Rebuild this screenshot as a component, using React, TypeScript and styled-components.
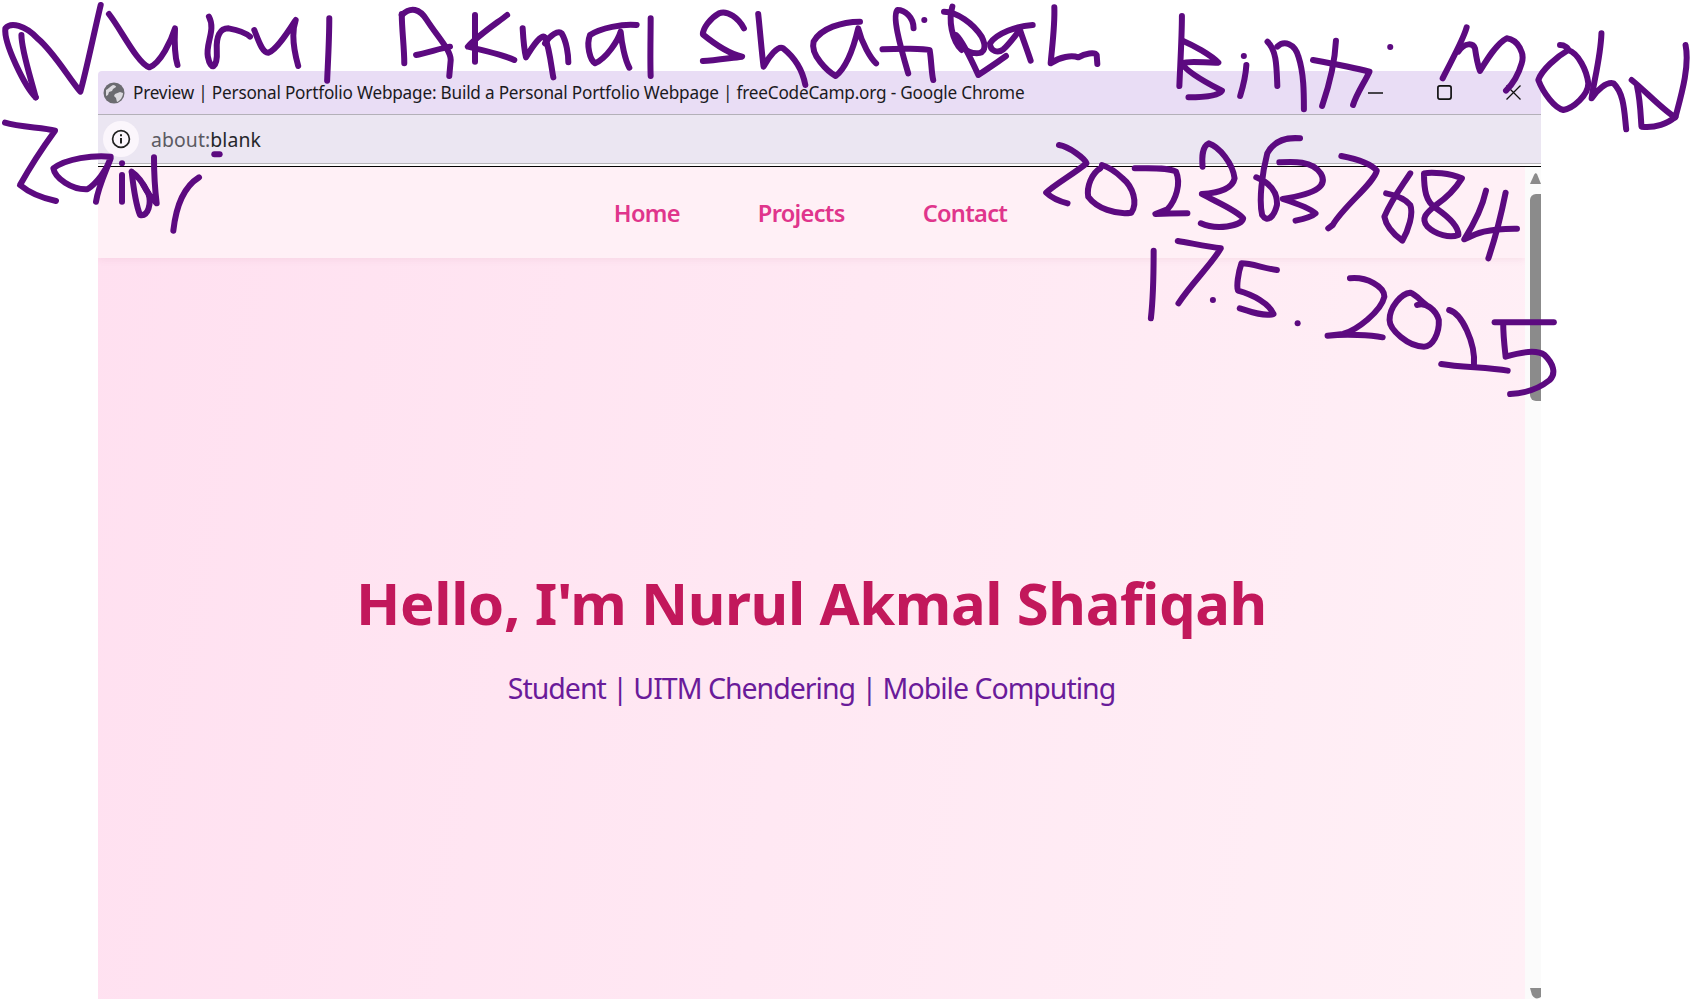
import React from "react";
import styled, { createGlobalStyle } from "styled-components";

const Global = createGlobalStyle`
  html, body { margin: 0; padding: 0; background: #fff; height: 100%; overflow: hidden; }
  body { font-family: "Open Sans", "Noto Sans", "Liberation Sans", sans-serif; }
`;

const Stage = styled.div`
  position: relative;
  width: 1691px;
  height: 999px;
  overflow: hidden;
  padding: 71px 150px 0 98px;
  box-sizing: border-box;
`;

const Window = styled.div`
  display: flex;
  flex-direction: column;
  height: 928px;
  border-top-left-radius: 4px;
  overflow: hidden;
`;

const TitleBar = styled.div`
  flex: 0 0 44px;
  box-sizing: border-box;
  display: flex;
  align-items: center;
  padding: 0 20px 0 5px;
  background: #e9ddf5;
  border-bottom: 1px solid #b3b0b8;
`;

const WindowTitle = styled.span`
  flex: 1;
  margin-left: 8px;
  font-family: "Noto Sans", sans-serif;
  font-size: 17.2px;
  letter-spacing: -0.21px;
  color: #1b1a1d;
  white-space: nowrap;
`;

const WindowControls = styled.div`
  display: flex;
  align-items: center;
  gap: 54px;
`;

const AddressBar = styled.div`
  flex: 0 0 49px;
  box-sizing: border-box;
  display: flex;
  align-items: center;
  padding-left: 5px;
  background: #ebe6f2;
  border-bottom: 1px solid #b9b7bc;
`;

const InfoChip = styled.div`
  width: 36px;
  height: 36px;
  border-radius: 50%;
  background: #fbf6fc;
  display: flex;
  align-items: center;
  justify-content: center;
`;

const Url = styled.span`
  margin-left: 12px;
  font-family: "Noto Sans", sans-serif;
  font-size: 19.4px;
  letter-spacing: 0.1px;
  color: #5b5a62;
`;

const UrlHost = styled.span`
  color: #26262b;
`;

const Rule = styled.div`
  flex: 0 0 3px;
  box-sizing: border-box;
  background: #fff;
  border-bottom: 1px solid #000;
`;

const Viewport = styled.div`
  flex: 1;
  min-height: 0;
  display: flex;
`;

const Page = styled.main`
  flex: 1;
  display: flex;
  flex-direction: column;
  background: linear-gradient(100deg, #ffe0f0 0%, #fff0f6 100%);
`;

const Nav = styled.nav`
  flex: 0 0 91px;
  box-sizing: border-box;
  display: flex;
  align-items: center;
  justify-content: center;
  gap: 78px;
  padding-right: 2px;
  background: #fff0f6;
  box-shadow: 0 2px 6px rgba(200, 120, 160, 0.12);
`;

const NavLink = styled.a`
  font-family: "Noto Sans", sans-serif;
  font-weight: 600;
  font-size: 23.6px;
  letter-spacing: -0.7px;
  color: #e0358c;
`;

const Hero = styled.section`
  flex: 1;
  display: flex;
  flex-direction: column;
  align-items: center;
  padding-top: 305px;
`;

const Heading = styled.h1`
  margin: 0;
  font-family: "Noto Sans", sans-serif;
  font-weight: 700;
  font-size: 58px;
  line-height: 80px;
  letter-spacing: -0.4px;
  color: #c2185b;
  white-space: nowrap;
`;

const Sub = styled.p`
  margin: 24px 0 0;
  font-family: "Noto Sans", sans-serif;
  font-size: 28.5px;
  line-height: 42px;
  letter-spacing: -1px;
  color: #6a1b9a;
  white-space: nowrap;
`;

const Scrollbar = styled.aside`
  flex: 0 0 16px;
  display: flex;
  flex-direction: column;
  align-items: flex-end;
  background: #fbfbfb;
  padding-top: 6px;
`;

const ScrollArrow = styled.svg`
  display: block;
  flex: none;
`;

const ScrollThumb = styled.div`
  width: 11px;
  height: 207px;
  margin-top: 9px;
  border-radius: 6px 0 0 6px;
  background: #8b8b8b;
`;

const ScrollSpacer = styled.div`
  flex: 1;
`;

const Ink = styled.svg`
  position: absolute;
  left: 0;
  top: 0;
  pointer-events: none;
  fill: none;
  stroke: #5c0a80;
  stroke-width: 6;
  stroke-linecap: round;
  stroke-linejoin: round;
`;

const InkStroke = styled.path`
  vector-effect: non-scaling-stroke;
`;

type Layer = { transform: string; strokes: string[] };

const layers: Layer[] = [
  {
    transform: "scale(0.35714 0.33333)",
    strokes: [
      "M100 292C70 260 10 130 15 85C30 65 70 75 105 115C150 155 190 230 225 275C240 220 265 90 282 15",
      "M60 105C60 150 85 230 100 292",
      "M305 42C340 90 385 190 418 202C450 190 480 120 490 85C488 130 490 170 497 195",
      "M585 50C605 90 575 130 582 170C590 215 610 205 607 150C605 110 615 85 640 85C665 90 690 100 700 110",
      "M712 90C725 125 735 160 752 158C775 150 810 90 828 60C815 100 825 160 835 198",
      "M922 55C922 120 918 190 916 242",
      "M1125 42C1125 90 1132 140 1132 190",
      "M1125 45C1150 20 1175 25 1195 60C1225 110 1262 150 1262 180L1258 228",
      "M1165 165C1190 160 1235 145 1260 140",
      "M1330 45V185",
      "M1420 45C1390 70 1340 105 1310 140C1350 150 1410 165 1440 180",
      "M600 463H615",
    ],
  },
  {
    transform: "translate(0 120) scale(0.33333)",
    strokes: [
      "M15 8C60 22 130 22 165 32C130 80 85 150 60 195C90 220 130 235 168 243",
      "M332 110C280 105 200 115 160 145C165 175 215 210 262 208C290 190 320 150 332 115C315 160 295 200 288 245",
      "M366 130h.1",
      "M366 165V245",
      "M395 155C400 200 410 260 420 285C445 290 455 250 445 220C430 190 410 165 395 155",
      "M462 112C462 160 465 210 470 250C455 235 440 215 430 195",
      "M597 172C560 195 530 240 520 332",
    ],
  },
  {
    transform: "translate(500 0) scale(0.33333)",
    strokes: [
      "M68 85C70 120 75 160 78 172C100 135 125 100 135 112C150 150 155 210 160 232",
      "M135 130C150 105 175 90 185 100C200 125 205 165 205 187",
      "M410 75C370 70 300 85 270 105C258 135 270 180 285 190C320 175 355 120 362 95C365 130 375 180 388 203",
      "M452 55C452 110 450 180 452 228",
    ],
  },
  {
    transform: "translate(560 0) scale(0.35714 0.33333)",
    strokes: [
      "M515 85C500 55 470 30 445 40C420 55 400 85 400 103C425 125 470 160 510 170C470 175 430 182 400 183",
      "M555 42C560 90 565 160 570 200C585 170 610 135 625 145C660 175 680 215 687 255",
      "M840 65C790 65 730 85 710 125C700 165 750 215 772 228C805 200 825 130 835 85C845 130 870 175 885 190",
      "M990 85C990 50 965 30 945 30C930 45 950 130 975 220",
      "M903 148C950 145 1020 145 1035 150C1040 180 1040 220 1045 240",
      "M1020 60h.1",
    ],
  },
  {
    transform: "translate(920 0) scale(0.33333)",
    strokes: [
      "M72 35C110 35 160 70 185 110C200 140 195 160 170 160C135 160 115 130 108 105C125 120 150 170 175 225C205 205 235 185 258 168",
      "M97 20C85 60 95 120 125 150",
      "M338 75C290 78 230 100 210 130C210 155 235 160 250 148C270 130 290 100 300 90C310 120 325 160 332 182",
      "M403 22C405 80 395 150 392 190C420 170 455 165 475 172C495 160 525 155 530 165L532 192",
    ],
  },
  {
    transform: "translate(1120 0) scale(0.36417 0.33333)",
    strokes: [
      "M170 48C170 110 165 200 163 258",
      "M172 122C200 135 250 165 270 188C240 190 190 180 170 190C185 220 250 255 280 272C270 290 215 292 188 292",
      "M340 168h.1",
      "M347 195C345 230 335 270 330 288",
      "M405 125C430 150 430 200 432 258",
      "M432 140C450 120 480 130 490 170C505 220 505 280 505 328",
      "M593 122C590 190 570 270 555 318",
      "M530 180C580 190 650 205 685 215C670 250 650 280 640 315",
      "M742 141h.1",
      "M1322 100C1320 170 1300 250 1295 295C1310 270 1335 245 1355 250C1385 280 1385 340 1390 388",
      "M1405 240C1440 270 1490 330 1525 352C1540 290 1565 200 1553 135",
      "M1420 260C1430 310 1430 360 1432 380C1470 385 1505 370 1525 350",
    ],
  },
  {
    transform: "translate(1430 20) scale(0.33333)",
    strokes: [
      "M110 22C100 60 60 130 38 175",
      "M85 95C105 65 130 70 135 85C140 120 145 140 150 153C170 120 200 70 230 55C265 60 285 100 275 130C265 165 250 190 228 212",
      "M390 75C405 75 415 85 415 90C380 110 335 150 325 180C340 220 375 265 400 270C430 265 475 225 475 190C470 150 445 100 415 90",
    ],
  },
  {
    transform: "translate(1040 130) scale(0.34439 0.33333)",
    strokes: [
      "M55 45C85 50 130 85 135 100C100 130 40 165 18 188C35 205 60 215 80 220",
      "M175 115C150 130 135 170 140 200C165 235 220 255 265 248C285 220 270 170 240 145C220 125 195 110 180 105",
      "M275 115C320 115 370 112 395 125C410 160 395 210 370 238L335 252C370 250 400 250 428 250",
      "M472 110C470 80 470 50 490 40C520 50 560 100 565 145C560 170 530 188 470 192C510 215 570 240 590 265C585 290 510 300 467 280",
      "M755 25C720 22 680 30 660 70C645 130 635 210 645 255C660 280 680 260 688 225C690 190 670 160 628 142",
      "M695 97C730 95 790 90 815 130C835 165 810 190 705 207C745 220 785 235 800 250C790 260 760 268 742 272",
      "M875 78C910 85 960 100 978 122C970 160 880 230 850 285L837 295",
      "M1075 130C1050 170 1020 210 1000 260C1005 290 1030 315 1052 332C1070 300 1085 250 1075 225C1060 205 1030 195 1005 190",
      "M1225 145C1190 130 1140 125 1115 130C1115 180 1120 215 1150 235C1185 260 1215 290 1215 315C1190 325 1150 315 1125 290C1105 265 1120 250 1150 225C1185 200 1210 170 1225 145",
      "M1295 182C1285 230 1255 290 1232 328C1265 310 1300 295 1385 296",
      "M1352 188C1340 250 1320 330 1302 385",
      "M330 362C330 430 328 510 322 565",
      "M400 333C440 340 490 350 525 355C500 400 440 460 402 520",
      "M502 510h.1",
      "M688 420C650 415 615 400 585 400C575 430 570 470 575 482C620 495 665 520 678 552C650 560 610 545 580 535",
      "M748 580h.1",
      "M900 445C950 440 1000 470 1000 500C990 545 920 600 880 612L835 617C890 612 960 615 995 622",
      "M1095 525C1120 515 1150 540 1158 570C1160 610 1140 650 1115 650C1070 650 1015 600 1015 570C1015 530 1050 490 1075 488C1095 495 1110 520 1130 530",
      "M1188 540C1225 550 1265 640 1260 705",
      "M1165 702C1220 712 1300 712 1358 722",
      "M1320 577H1492",
      "M1345 580C1345 620 1350 660 1352 680C1400 665 1445 660 1465 675C1490 700 1500 730 1480 750C1450 775 1410 790 1365 792",
    ],
  },
];

const Favicon = () => (
  <svg width="22" height="22" viewBox="0 0 22 22">
    <circle cx="11" cy="11" r="10.5" fill="#6b6b70" />
    <path d="M3 8c2-1 5-4 7-5 2 0 3 1 3 2l-3 2-1 2-3 1-1 3-2 1zM12 12l5-2 3 1c0 4-3 8-6 9l-1-4-2-2z" fill="#dcdadf" />
  </svg>
);

const InfoIcon = () => (
  <svg width="20" height="20" viewBox="0 0 20 20" fill="none" stroke="#222" strokeWidth="1.7">
    <circle cx="10" cy="10" r="8.4" />
    <path d="M10 9v5.4" strokeWidth="2" />
    <path d="M10 5.3v2" strokeWidth="2" />
  </svg>
);

const MinimizeIcon = () => (
  <svg width="15" height="14" viewBox="0 0 15 14" stroke="#111" strokeWidth="1.4">
    <path d="M0 7h15" />
  </svg>
);

const MaximizeIcon = () => (
  <svg width="15" height="15" viewBox="0 0 15 15" fill="none" stroke="#111" strokeWidth="1.7">
    <rect x=".9" y=".9" width="13.2" height="13.2" rx="2" />
  </svg>
);

const CloseIcon = () => (
  <svg width="15" height="15" viewBox="0 0 15 15" stroke="#111" strokeWidth="1.3">
    <path d="M.5.5l14 14M14.5.5l-14 14" />
  </svg>
);

export default function App() {
  return (
    <>
      <Global />
      <Stage>
        <Window>
          <TitleBar>
            <Favicon />
            <WindowTitle>
              Preview | Personal Portfolio Webpage: Build a Personal Portfolio Webpage | freeCodeCamp.org - Google Chrome
            </WindowTitle>
            <WindowControls>
              <MinimizeIcon />
              <MaximizeIcon />
              <CloseIcon />
            </WindowControls>
          </TitleBar>
          <AddressBar>
            <InfoChip>
              <InfoIcon />
            </InfoChip>
            <Url>
              about:<UrlHost>blank</UrlHost>
            </Url>
          </AddressBar>
          <Rule />
          <Viewport>
            <Page>
              <Nav>
                <NavLink>Home</NavLink>
                <NavLink>Projects</NavLink>
                <NavLink>Contact</NavLink>
              </Nav>
              <Hero>
                <Heading>Hello, I'm Nurul Akmal Shafiqah</Heading>
                <Sub>Student | UITM Chendering | Mobile Computing</Sub>
              </Hero>
            </Page>
            <Scrollbar>
              <ScrollArrow width="11" height="12" viewBox="0 0 11 12">
                <path d="M0 11L4 2c1-2 2-2 3-1l4 10z" fill="#8b8b8b" />
              </ScrollArrow>
              <ScrollThumb />
              <ScrollSpacer />
              <ScrollArrow width="11" height="11" viewBox="0 0 11 11">
                <path d="M0 0h11v9l-2 1c-3 1-5 0-7-3z" fill="#8b8b8b" />
              </ScrollArrow>
            </Scrollbar>
          </Viewport>
        </Window>
        <Ink width="1691" height="999" viewBox="0 0 1691 999">
          {layers.map((layer) => (
            <g key={layer.transform} transform={layer.transform}>
              {layer.strokes.map((d) => (
                <InkStroke key={d} d={d} />
              ))}
            </g>
          ))}
        </Ink>
      </Stage>
    </>
  );
}
